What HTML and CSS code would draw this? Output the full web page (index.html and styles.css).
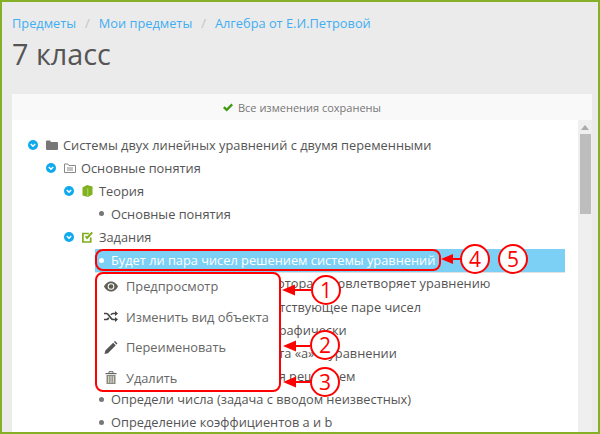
FILE: index.html
```html
<!DOCTYPE html>
<html lang="ru">
<head>
<meta charset="utf-8">
<title>7 класс</title>
<link rel="stylesheet" href="styles.css">
</head>
<body>
<div class="frame">
  <nav class="crumbs">
    <a>Предметы</a><span class="sep">/</span><a>Мои предметы</a><span class="sep">/</span><a>Алгебра от Е.И.Петровой</a>
  </nav>
  <h1 class="title">7 класс</h1>
  <section class="panel">
    <div class="status">
      <svg class="check" viewBox="0 0 12 10"><path d="M1 5.500l1.700-1.700 2 2L9.400 1 11 2.700 4.700 9z" fill="#3f9a12"/></svg>
      <span>Все изменения сохранены</span>
    </div>
    <div class="body">
      <ul class="tree">
        <li class="row l0"><svg class="tog" viewBox="0 0 10 10"><circle cx="5" cy="5" r="5" fill="#0fa9ee"/><path d="M2.800 4l2.200 2.200L7.200 4" fill="none" stroke="#fff" stroke-width="1.500"/></svg><svg class="ico" viewBox="0 0 12 10"><path d="M0 1.500Q0 .5 1 .5h3l1 1.500h6q1 0 1 1v6q0 1-1 1H1q-1 0-1-1z" fill="#777"/></svg><span>Системы двух линейных уравнений с двумя переменными</span></li>
        <li class="row l1"><svg class="tog" viewBox="0 0 10 10"><circle cx="5" cy="5" r="5" fill="#0fa9ee"/><path d="M2.800 4l2.200 2.200L7.200 4" fill="none" stroke="#fff" stroke-width="1.500"/></svg><svg class="ico" viewBox="0 0 12 10"><path d="M.5 1h3.500l1 1.500h6.500v7H.5zM3 5h6M3 7h6" fill="none" stroke="#888"/></svg><span>Основные понятия</span></li>
        <li class="row l2"><svg class="tog" viewBox="0 0 10 10"><circle cx="5" cy="5" r="5" fill="#0fa9ee"/><path d="M2.800 4l2.200 2.200L7.200 4" fill="none" stroke="#fff" stroke-width="1.500"/></svg><svg class="ico tall" viewBox="0 0 11 12"><path d="M.5 2.500L5 0l5.500 1.500v8L6 12 .5 10.500z" fill="#7fb21e"/><path d="M5.800 3v8.500" stroke="#c4dc8c" stroke-width=".8"/></svg><span>Теория</span></li>
        <li class="row leaf"><i class="dot"></i><span>Основные понятия</span></li>
        <li class="row l2"><svg class="tog" viewBox="0 0 10 10"><circle cx="5" cy="5" r="5" fill="#0fa9ee"/><path d="M2.800 4l2.200 2.200L7.200 4" fill="none" stroke="#fff" stroke-width="1.500"/></svg><svg class="ico tall" viewBox="0 0 11 12"><path d="M8.700 6.500v4.500H.9V2.500h6" fill="none" stroke="#7fae1a" stroke-width="1.700"/><path d="M3 6l2 2.500L11 2 9.500.8 5 5.500 4 4.500z" fill="#7fae1a"/></svg><span>Задания</span></li>
        <li class="row leaf selected"><i class="dot"></i><span>Будет ли пара чисел решением системы уравнений</span></li>
        <li class="row leaf"><i class="dot"></i><span>Найди такую пару чисел, которая удовлетворяет уравнению</span></li>
        <li class="row leaf"><i class="dot"></i><span>Выбери уравнение, соответствующее паре чисел</span></li>
        <li class="row leaf"><i class="dot"></i><span>Реши систему уравнений графически</span></li>
        <li class="row leaf"><i class="dot"></i><span>Определение коэффициента «а» в уравнении</span></li>
        <li class="row leaf"><i class="dot"></i><span>Выбери числа, являющиеся решением</span></li>
        <li class="row leaf"><i class="dot"></i><span>Определи числа (задача с вводом неизвестных)</span></li>
        <li class="row leaf"><i class="dot"></i><span>Определение коэффициентов a и b</span></li>
      </ul>
      <div class="scrollbar">
        <span class="arrow"></span>
        <span class="thumb"></span>
      </div>
    </div>
  </section>

  <ul class="menu">
    <li><svg viewBox="0 0 14 10"><path d="M7 0C3.500 0 1 2.700 0 5c1 2.300 3.500 5 7 5s6-2.700 7-5c-1-2.300-3.500-5-7-5z" fill="#5f5f55"/><circle cx="7" cy="5" r="3.300" fill="#fff"/><circle cx="7" cy="5" r="2.300" fill="#5f5f55"/></svg><span>Предпросмотр</span></li>
    <li><svg viewBox="0 0 14 11"><path d="M0 2.500h2.500c2.500 0 4 6 6.500 6h2M0 8.500h2.500c1 0 1.700-.8 2.300-1.800M7 3.800C7.500 3 8.200 2.500 9 2.500h2" fill="none" stroke="#444" stroke-width="1.700"/><path d="M11 0l3 2.500L11 5zM11 6l3 2.500-3 2.500z" fill="#444"/></svg><span>Изменить вид объекта</span></li>
    <li><svg viewBox="0 0 12 12"><path d="M0 12l.8-3.200L8 1.600l2.400 2.400-7.200 7.200zM8.700.9l.7-.7q.3-.2.600 0l1.800 1.800q.2.300 0 .6l-.7.700z" fill="#555"/></svg><span>Переименовать</span></li>
    <li><svg viewBox="0 0 11 13"><path d="M0 2h11v1.200H0z" fill="#666"/><path d="M3.500 2V.7h4V2" fill="none" stroke="#666"/><path d="M1 4h9v9H1z" fill="#8a8a7c"/><path d="M3.200 5v7M5.500 5v7M7.800 5v7" stroke="#fff" stroke-width=".8"/></svg><span>Удалить</span></li>
  </ul>

  <div class="callout"></div>
  <svg class="arrows" viewBox="0 0 600 434">
    <g fill="none" stroke="#f00" stroke-width="2">
      <path d="M452 259h10M293 290h18M293 346h17M293 382h17"/>
    </g>
    <g fill="#f00">
      <path d="M441 259l12-5v10zM282 290l13-5.500v11zM283 346l13-5.500v11zM283 382l13-5.500v11z"/>
    </g>
  </svg>
  <span class="num n4">4</span>
  <span class="num n5">5</span>
  <span class="num n1">1</span>
  <span class="num n2">2</span>
  <span class="num n3">3</span>
</div>
</body>
</html>
```
FILE: styles.css
```css
* { box-sizing: border-box; }
html, body { margin: 0; padding: 0; }
body {
  width: 600px;
  height: 434px;
  overflow: hidden;
  font-family: "Open Sans", sans-serif;
  color: #555;
}
.frame {
  position: relative;
  width: 600px;
  height: 434px;
  overflow: hidden;
  background: #ebebeb;
  border: 2px solid #86b025;
  padding: 11px 8px 0 10px;
}
.crumbs {
  display: flex;
  align-items: center;
  height: 20px;
  font-size: 12.800px;
  line-height: 20px;
  color: #42aef2;
}
.sep { color: #c4c4c4; margin: 0 9px; }
.title {
  margin: 3px 0 0;
  font-size: 28.800px;
  line-height: 36px;
  font-weight: 400;
  color: #555;
}
.panel {
  margin-top: 22px;
  width: 580px;
  background: #fff;
  height: 340px;
}
.status {
  height: 26px;
  background: #f9f9f9;
  display: flex;
  align-items: center;
  justify-content: center;
  gap: 4px;
  font-size: 11px;
  color: #777;
  padding-right: 1px;
}
.check { width: 12px; height: 11px; }
.body { display: flex; height: 314px; }
.tree {
  flex: 1;
  list-style: none;
  margin: 0;
  padding: 13px 0 0;
}
.row {
  display: flex;
  align-items: center;
  height: 23.150px;
  font-size: 12.800px;
  color: #555;
  white-space: nowrap;
}
.tog { width: 10px; height: 10px; flex: none; margin-right: 8px; }
.ico { width: 12px; height: 10px; flex: none; margin-right: 5px; }
.ico.tall { width: 11px; height: 12px; margin-right: 6px; }
.l0 { padding-left: 16px; }
.l1 { padding-left: 34px; }
.l2 { padding-left: 52px; }
.leaf { padding-left: 87px; }
.dot {
  width: 5px;
  height: 5px;
  border-radius: 50%;
  background: #777;
  flex: none;
  margin-right: 7px;
}
.selected {
  margin-left: 83px;
  padding-left: 4px;
  width: 470px;
  background: #7dd0f5;
  color: #fff;
  box-shadow: 0 1px 0 #e2e2e2;
}
.selected .dot { background: #fff; }
.scrollbar {
  width: 14px;
  flex: none;
  background: #efefef;
  display: flex;
  flex-direction: column;
  align-items: center;
  padding-top: 5px;
}
.arrow {
  width: 0;
  height: 0;
  border-left: 4px solid transparent;
  border-right: 4px solid transparent;
  border-bottom: 5px solid #aaa;
}
.thumb {
  margin-top: 4px;
  width: 11px;
  height: 80px;
  background: #bdbdbd;
}
.menu {
  position: absolute;
  left: 93px;
  top: 270px;
  width: 186px;
  height: 120px;
  margin: 0;
  padding: 0;
  list-style: none;
  background: #fff;
  border: 2px solid #f00;
  border-radius: 8px;
  font-size: 12.800px;
  color: #666;
  display: flex;
  flex-direction: column;
  justify-content: center;
}
.menu li {
  display: flex;
  flex: none;
  align-items: center;
  height: 30.600px;
  padding-left: 7px;
  white-space: nowrap;
  gap: 8px;
}
.menu svg { width: 14px; height: 13px; flex: none; }
.callout {
  position: absolute;
  left: 93px;
  top: 247px;
  width: 346px;
  height: 22px;
  border: 2px solid #f00;
  border-radius: 8px;
}
.arrows {
  position: absolute;
  left: -2px;
  top: -2px;
  width: 600px;
  height: 434px;
  pointer-events: none;
}
.num {
  position: absolute;
  width: 30px;
  height: 30px;
  border: 2px solid #f00;
  border-radius: 50%;
  background: #fff;
  color: #f00;
  font-size: 21px;
  line-height: 26px;
  text-align: center;
}
.n4 { left: 458px; top: 242px; }
.n5 { left: 496px; top: 242px; }
.n1 { left: 309px; top: 273px; }
.n2 { left: 308px; top: 328px; }
.n3 { left: 308px; top: 365px; }
```
